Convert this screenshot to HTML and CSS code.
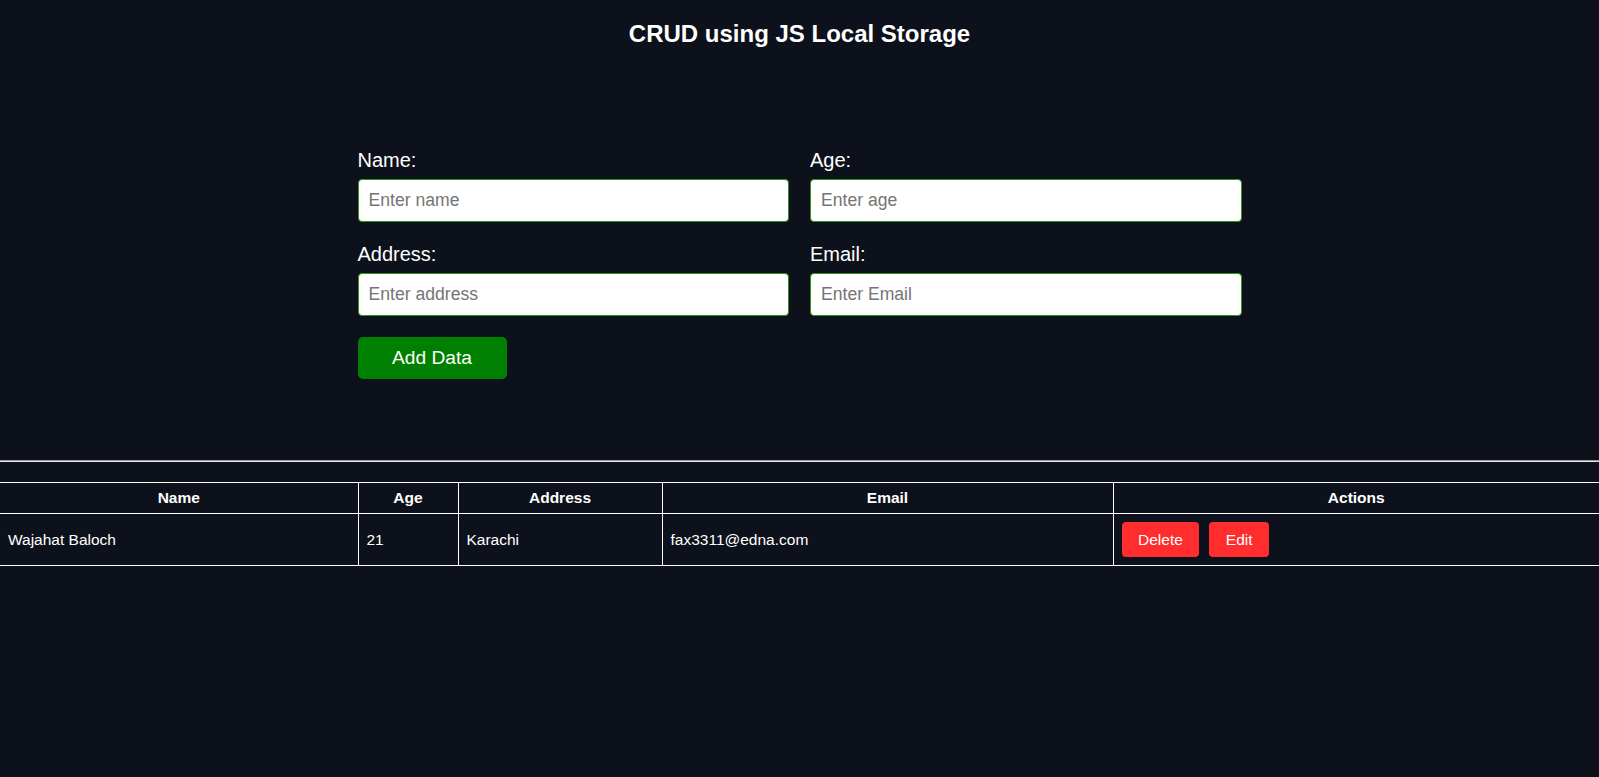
FILE: index.html
```html
<!DOCTYPE html>
<html lang="en">
<head>
<meta charset="utf-8">
<title>CRUD using JS Local Storage</title>
<link rel="stylesheet" href="styles.css">
</head>
<body>
<h2 class="title">CRUD using JS Local Storage</h2>

<form class="form">
  <div class="grid">
    <div class="field">
      <label class="label" for="name">Name:</label>
      <input class="input" id="name" type="text" placeholder="Enter name">
    </div>
    <div class="field">
      <label class="label" for="age">Age:</label>
      <input class="input" id="age" type="text" placeholder="Enter age">
    </div>
    <div class="field">
      <label class="label" for="address">Address:</label>
      <input class="input" id="address" type="text" placeholder="Enter address">
    </div>
    <div class="field">
      <label class="label" for="email">Email:</label>
      <input class="input" id="email" type="text" placeholder="Enter Email">
    </div>
  </div>
  <button class="add-btn" type="button">Add Data</button>
</form>

<hr class="divider">

<table class="table">
  <colgroup>
    <col class="c-name">
    <col class="c-age">
    <col class="c-address">
    <col class="c-email">
    <col class="c-actions">
  </colgroup>
  <thead>
    <tr>
      <th>Name</th>
      <th>Age</th>
      <th>Address</th>
      <th>Email</th>
      <th>Actions</th>
    </tr>
  </thead>
  <tbody>
    <tr>
      <td>Wajahat Baloch</td>
      <td>21</td>
      <td>Karachi</td>
      <td>fax3311@edna.com</td>
      <td>
        <div class="actions">
          <button class="act-btn" type="button">Delete</button>
          <button class="act-btn" type="button">Edit</button>
        </div>
      </td>
    </tr>
  </tbody>
</table>
</body>
</html>
```

FILE: styles.css
```css
html, body {
  margin: 0;
  padding: 0;
}

body {
  background: #0d111b;
  color: #ffffff;
  font-family: "Liberation Sans", Arial, sans-serif;
}

.title {
  margin: 20px 0 0;
  font-size: 24px;
  line-height: 28px;
  font-weight: bold;
  text-align: center;
}

.form {
  width: 884px;
  margin: 101px auto 0;
  padding-bottom: 81px;
}

.grid {
  display: grid;
  grid-template-columns: 1fr 1fr;
  column-gap: 21px;
  row-gap: 21px;
}

.field {
  display: flex;
  flex-direction: column;
}

.label {
  font-size: 20px;
  line-height: 23px;
  margin-bottom: 7px;
}

.input {
  box-sizing: border-box;
  height: 43px;
  width: 100%;
  margin: 0;
  padding: 0 10px;
  border: 1px solid #2f9214;
  border-radius: 4px;
  background: #ffffff;
  color: #000;
  font-family: "Liberation Sans", Arial, sans-serif;
  font-size: 17.6px;
  outline: none;
}

.input::placeholder {
  color: #757575;
}

.add-btn {
  display: block;
  box-sizing: border-box;
  margin-top: 21px;
  width: 149px;
  height: 42px;
  padding: 0;
  border: none;
  border-radius: 5px;
  background: #008000;
  color: #ffffff;
  font-family: "Liberation Sans", Arial, sans-serif;
  font-size: 19.2px;
}

.divider {
  margin: 0;
  height: 0;
  border: none;
  border-top: 1px solid #9a9a9a;
  border-bottom: 1px solid #e6e6e6;
}

.table {
  width: 100%;
  margin-top: 20px;
  border-collapse: collapse;
  table-layout: fixed;
  font-size: 15.5px;
}

.c-name { width: 358px; }
.c-age { width: 100px; }
.c-address { width: 204px; }
.c-email { width: 451px; }

.table th,
.table td {
  border: 1px solid #ffffff;
}

.table th:first-child,
.table td:first-child {
  border-left: none;
}

.table th:last-child,
.table td:last-child {
  border-right: none;
}

.table th {
  padding: 6px 8px;
  font-weight: bold;
  text-align: center;
  line-height: 18px;
}

.table td {
  padding: 8px;
  text-align: left;
  font-weight: normal;
  line-height: 18px;
}

.actions {
  display: flex;
  gap: 10px;
}

.act-btn {
  box-sizing: border-box;
  height: 35px;
  padding: 0 16.5px;
  border: none;
  border-radius: 4px;
  background: #ff2d2d;
  color: #ffffff;
  font-family: "Liberation Sans", Arial, sans-serif;
  font-size: 15.5px;
}
```
